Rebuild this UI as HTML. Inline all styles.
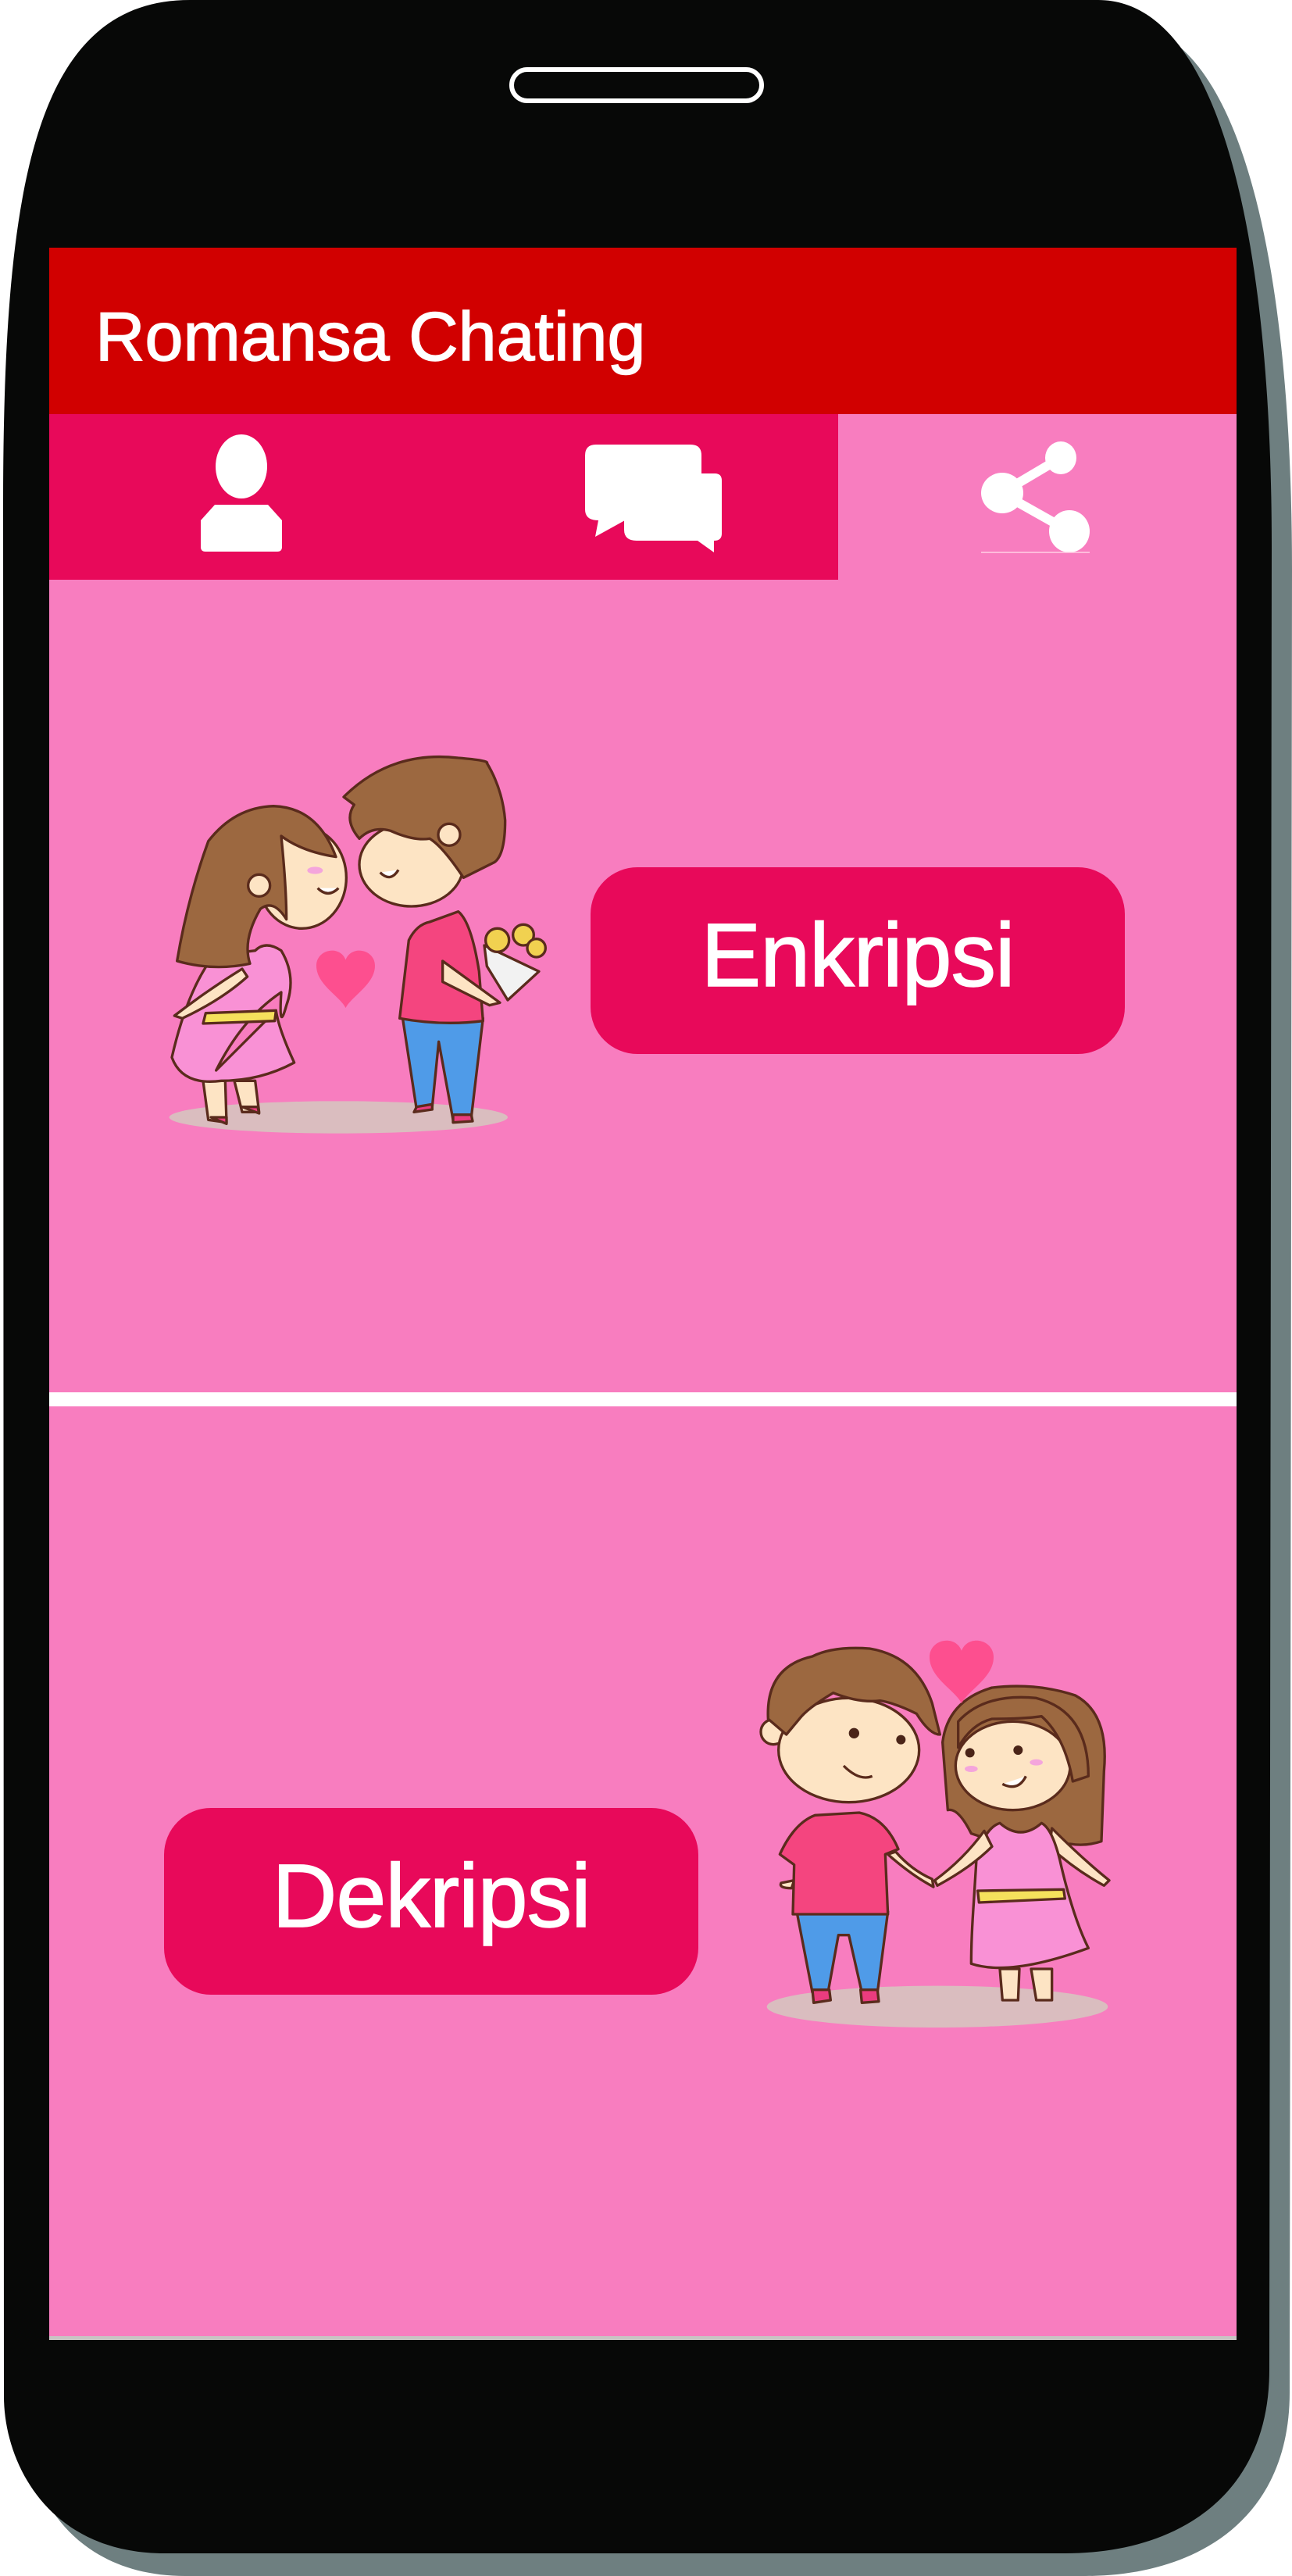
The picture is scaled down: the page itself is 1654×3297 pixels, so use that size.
<!DOCTYPE html>
<html><head><meta charset="utf-8"><style>
html,body{margin:0;padding:0;background:#fff;}
body{width:1654px;height:3297px;position:relative;overflow:hidden;}
svg{position:absolute;left:0;top:0;}
</style></head><body>
<svg width="1654" height="3297" viewBox="0 0 1654 3297" xmlns="http://www.w3.org/2000/svg">
<path transform="translate(26,29)" d="M4,650 C4,250 40,0 243,0 L1406,0 C1560,0 1628,300 1628,700 L1625,3033 C1625,3200 1500,3268 1364,3268 L211,3268 C60,3268 5,3150 5,3067 Z" fill="#6e7f80"/>
<path d="M4,650 C4,250 40,0 243,0 L1406,0 C1560,0 1628,300 1628,700 L1625,3033 C1625,3200 1500,3268 1364,3268 L211,3268 C60,3268 5,3150 5,3067 Z" fill="#070807"/>
<rect x="655" y="89" width="320" height="40" rx="20" fill="#070807" stroke="#fff" stroke-width="6"/>
<rect x="63" y="317" width="1520" height="213" fill="#d10000"/>
<text x="122" y="461" font-family="Liberation Sans, sans-serif" font-size="88" fill="#fff" stroke="#fff" stroke-width="1.5">Romansa Chating</text>
<rect x="63" y="530" width="1010" height="212" fill="#e8095a"/>
<rect x="1073" y="530" width="510" height="212" fill="#f87dbf"/>
<ellipse cx="309" cy="597" rx="33" ry="41" fill="#fff"/>
<path d="M275,646 L343,646 L361,666 L361,700 Q361,706 355,706 L263,706 Q257,706 257,700 L257,666 Z" fill="#fff"/>
<path d="M813,606 L915,606 Q924,606 924,615 L924,683 Q924,692 914,692 L914,707 L893,692 L815,692 Q799,692 799,678 L799,666 Z" fill="#fff"/>
<path d="M763,569 L884,569 Q898,569 898,583 L898,652 Q898,666 884,666 L800,666 L762,687 L766,666 Q749,666 749,652 L749,583 Q749,569 763,569 Z" fill="#fff"/>
<path d="M1358,586 L1282,631 L1369,680" stroke="#fff" stroke-width="12" fill="none"/>
<ellipse cx="1358" cy="586" rx="20" ry="21" fill="#fff"/>
<ellipse cx="1283" cy="631" rx="27" ry="26" fill="#fff"/>
<ellipse cx="1369" cy="680" rx="26" ry="27" fill="#fff"/>
<line x1="1256" y1="707" x2="1395" y2="707" stroke="#ffd0e6" stroke-width="1.5"/>
<rect x="63" y="742" width="1520" height="1040" fill="#f87dbf"/>
<rect x="63" y="1782" width="1520" height="18" fill="#fff"/>
<rect x="63" y="1800" width="1520" height="1190" fill="#f87dbf"/>
<rect x="63" y="2990" width="1520" height="5" fill="#c9c3c3"/>
<rect x="756" y="1110" width="684" height="239" rx="60" fill="#e8095a"/>
<text x="1098" y="1262" text-anchor="middle" font-family="Liberation Sans, sans-serif" font-size="115" letter-spacing="-1" fill="#fff" stroke="#fff" stroke-width="1.5">Enkripsi</text>
<rect x="210" y="2314" width="684" height="239" rx="60" fill="#e8095a"/>
<text x="552" y="2466" text-anchor="middle" font-family="Liberation Sans, sans-serif" font-size="115" letter-spacing="-1" fill="#fff" stroke="#fff" stroke-width="1.5">Dekripsi</text>

<g transform="translate(200,950) scale(0.33333)" stroke="#5a2b1c" stroke-width="10" stroke-linejoin="round">
 <ellipse cx="700" cy="1440" rx="650" ry="62" fill="#dabdbf" stroke="none"/>
 <path d="M180,1300 L200,1450 L270,1460 L265,1300 Z M300,1300 L330,1420 L395,1420 L380,1300 Z" fill="#fde4c4"/>
 <path d="M210,1440 L270,1465 L270,1440 Z M330,1400 L395,1425 L390,1400 Z" fill="#ea3c7f"/>
 <path d="M230,1260 Q330,1060 480,960 Q470,1120 500,1010 Q540,900 480,800 Q420,760 380,800 L220,820 Q120,950 60,1210 Q100,1320 250,1300 Q400,1300 530,1230 Q470,1100 460,1030 Z" fill="#f991d5"/>
 <path d="M190,1040 L460,1030 L455,1070 L180,1080 Z" fill="#f5e15c"/>
 <path d="M70,1050 Q200,950 330,870 L350,900 Q250,990 100,1060 Z" fill="#fde4c4"/>
 <ellipse cx="560" cy="520" rx="170" ry="195" fill="#fde4c4"/>
 <path d="M80,840 Q120,600 200,380 Q300,250 450,245 Q620,250 690,440 Q560,420 480,360 Q500,560 500,680 Q450,600 400,640 Q330,760 360,850 Q220,880 80,840 Z" fill="#9c6840"/>
 <circle cx="395" cy="550" r="42" fill="#fde4c4"/>
 <ellipse cx="610" cy="492" rx="30" ry="14" fill="#f4a5dc" stroke="none"/>
 <path d="M620,560 Q660,600 700,560" fill="#fff"/>
 <path d="M945,1050 L1000,1410 L1060,1400 L1085,1150 L1140,1450 L1210,1440 L1255,1060 Z" fill="#4f9be8"/>
 <path d="M1000,1400 L990,1420 L1060,1410 L1060,1390 Z M1140,1430 L1140,1460 L1215,1455 L1210,1430 Z" fill="#ea3c7f"/>
 <path d="M1050,690 Q1000,700 970,760 L935,1060 Q1100,1090 1255,1070 L1240,880 Q1210,690 1160,650 Z" fill="#f4457f"/>
 <path d="M1100,840 L1320,1000 L1280,1010 L1100,920 Z" fill="#fde4c4"/>
 <path d="M1260,780 L1470,880 L1350,990 L1270,860 Z" fill="#f2f2f2"/>
 <circle cx="1310" cy="760" r="45" fill="#f1d150"/><circle cx="1410" cy="740" r="40" fill="#f1d150"/><circle cx="1460" cy="790" r="35" fill="#f1d150"/>
 <ellipse cx="980" cy="470" rx="200" ry="160" fill="#fde4c4"/>
 <path d="M720,210 Q900,30 1160,60 Q1280,70 1270,80 Q1330,180 1340,300 Q1340,430 1300,460 L1180,520 Q1100,400 1050,370 Q990,380 900,340 Q830,320 780,370 Q720,300 760,240 Z" fill="#9c6840"/>
 <circle cx="1125" cy="355" r="42" fill="#fde4c4"/>
 <path d="M860,500 Q900,540 930,490" fill="#fff"/>
</g>
<path transform="translate(405,1215) scale(0.75)" d="M50,100 C40,80 0,60 0,28 C0,0 40,-8 50,18 C60,-8 100,0 100,28 C100,60 60,80 50,100 Z" fill="#fd4f8f"/>

<g transform="translate(960,2080) scale(0.33333)" stroke="#5a2b1c" stroke-width="10" stroke-linejoin="round">
 <ellipse cx="720" cy="1465" rx="655" ry="80" fill="#dabdbf" stroke="none"/>
 <path d="M180,1100 L240,1410 L300,1410 L340,1190 L380,1190 L430,1410 L490,1410 L530,1100 Z" fill="#4f9be8"/>
 <path d="M240,1400 L245,1450 L310,1440 L305,1400 Z M425,1400 L430,1450 L495,1445 L490,1400 Z" fill="#ea3c7f"/>
 <path d="M120,990 Q110,1010 160,1010 L170,980 Z" fill="#fde4c4"/>
 <path d="M250,730 Q170,760 115,880 L170,920 L165,1110 L530,1110 L520,880 L570,860 Q520,740 420,720 Z" fill="#f4457f"/>
 <path d="M530,880 Q620,960 705,1005 L700,975 Q620,940 560,870 Z" fill="#fde4c4"/>
 <circle cx="90" cy="410" r="48" fill="#fde4c4"/>
 <ellipse cx="380" cy="480" rx="270" ry="200" fill="#fde4c4"/>
 <path d="M70,360 Q60,160 240,120 Q320,80 460,90 Q640,120 700,300 L730,420 Q690,420 640,340 Q560,300 500,290 Q420,300 320,260 Q220,320 190,360 L140,420 Z" fill="#9c6840"/>
 <circle cx="400" cy="415" r="20" fill="#4a2418" stroke="none"/><circle cx="580" cy="440" r="18" fill="#4a2418" stroke="none"/>
 <path d="M360,540 Q420,600 470,580" fill="none"/>
 <path d="M960,1320 L970,1440 L1030,1440 L1035,1320 Z M1080,1320 L1100,1440 L1160,1440 L1160,1320 Z" fill="#fde4c4"/>
 <path d="M740,450 Q760,290 930,240 Q1100,220 1250,270 Q1380,340 1360,560 L1350,830 Q1290,850 1230,840 L1000,850 L850,800 Q800,700 760,710 Z" fill="#9c6840"/>
 <path d="M1160,780 Q1280,900 1380,980 L1360,1000 Q1250,940 1150,850 Z" fill="#fde4c4"/>
 <path d="M960,760 Q900,780 870,900 L860,1060 Q850,1200 850,1300 Q1000,1350 1300,1240 Q1240,1120 1190,900 Q1160,780 1120,760 Q1040,830 960,760 Z" fill="#f991d5"/>
 <path d="M875,1020 L1205,1015 L1210,1050 L880,1065 Z" fill="#f5e15c"/>
 <path d="M900,790 Q820,900 710,980 L720,1000 Q850,930 930,850 Z" fill="#fde4c4"/>
 <ellipse cx="1010" cy="540" rx="220" ry="170" fill="#fde4c4"/>
 <path d="M800,470 Q850,380 930,360 Q1050,360 1120,350 Q1210,430 1240,600 L1300,580 Q1300,330 1100,280 Q900,260 800,370 Z" fill="#9c6840"/>
 <circle cx="845" cy="490" r="18" fill="#4a2418" stroke="none"/><circle cx="1030" cy="480" r="18" fill="#4a2418" stroke="none"/>
 <ellipse cx="850" cy="552" rx="25" ry="12" fill="#f4a5dc" stroke="none"/><ellipse cx="1100" cy="527" rx="25" ry="12" fill="#f4a5dc" stroke="none"/>
 <path d="M970,610 Q1030,640 1060,580" fill="#fff"/>
</g>
<path transform="translate(1190,2098) scale(0.82)" d="M50,100 C40,80 0,60 0,28 C0,0 40,-8 50,18 C60,-8 100,0 100,28 C100,60 60,80 50,100 Z" fill="#fd4f8f"/>
</svg>
</body></html>
